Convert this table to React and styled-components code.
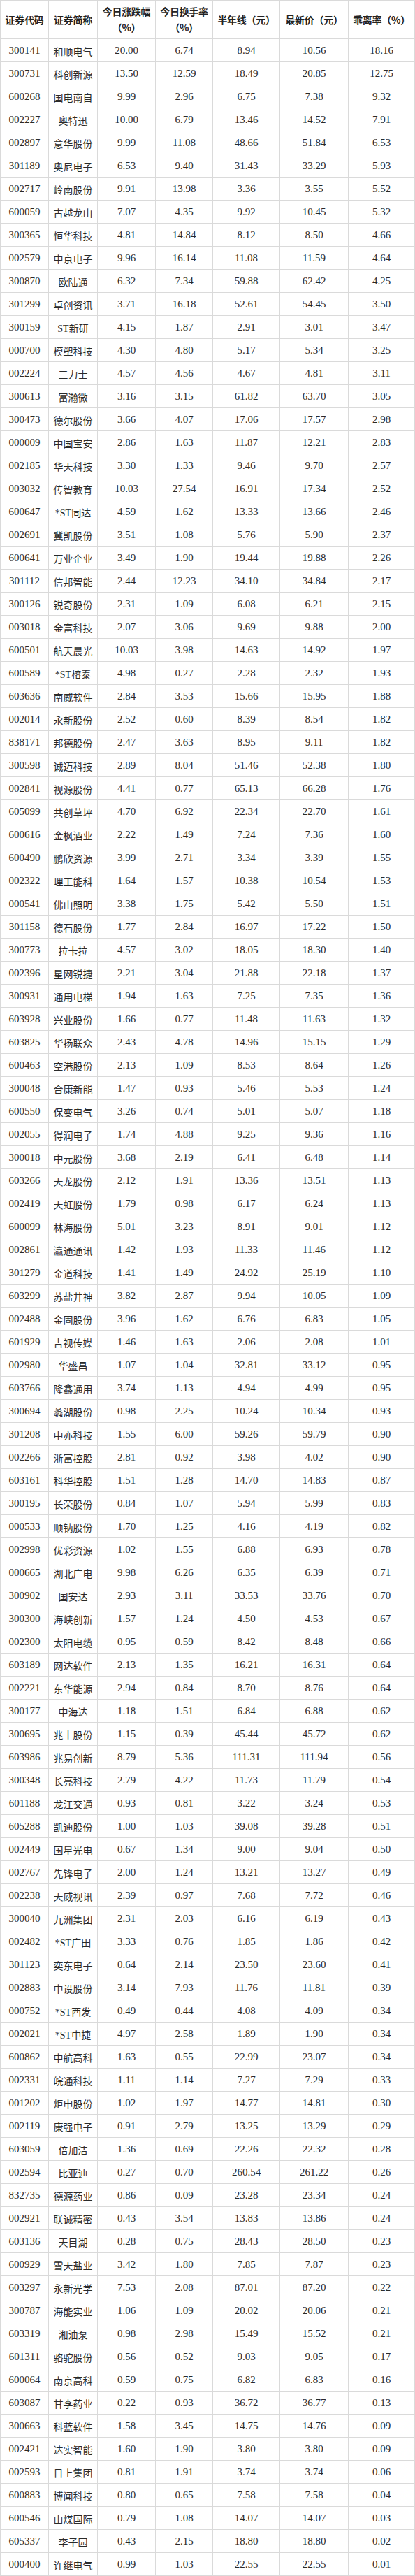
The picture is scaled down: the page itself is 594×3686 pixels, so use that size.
import React from "react";
import styled, { createGlobalStyle } from "styled-components";

const GlobalStyle = createGlobalStyle`
  html, body {
    margin: 0;
    padding: 0;
    background: #fff;
  }
  body {
    font-family: "Liberation Serif", "Noto Sans CJK SC", serif;
    color: #222;
  }
`;

const RAW = `
300141 和顺电气 20.00 6.74 8.94 10.56 18.16
300731 科创新源 13.50 12.59 18.49 20.85 12.75
600268 国电南自 9.99 2.96 6.75 7.38 9.32
002227 奥特迅 10.00 6.79 13.46 14.52 7.91
002897 意华股份 9.99 11.08 48.66 51.84 6.53
301189 奥尼电子 6.53 9.40 31.43 33.29 5.93
002717 岭南股份 9.91 13.98 3.36 3.55 5.52
600059 古越龙山 7.07 4.35 9.92 10.45 5.32
300365 恒华科技 4.81 14.84 8.12 8.50 4.66
002579 中京电子 9.96 16.14 11.08 11.59 4.64
300870 欧陆通 6.32 7.34 59.88 62.42 4.25
301299 卓创资讯 3.71 16.18 52.61 54.45 3.50
300159 ST新研 4.15 1.87 2.91 3.01 3.47
000700 模塑科技 4.30 4.80 5.17 5.34 3.25
002224 三力士 4.57 4.56 4.67 4.81 3.11
300613 富瀚微 3.16 3.15 61.82 63.70 3.05
300473 德尔股份 3.66 4.07 17.06 17.57 2.98
000009 中国宝安 2.86 1.63 11.87 12.21 2.83
002185 华天科技 3.30 1.33 9.46 9.70 2.57
003032 传智教育 10.03 27.54 16.91 17.34 2.52
600647 *ST同达 4.59 1.62 13.33 13.66 2.46
002691 冀凯股份 3.51 1.08 5.76 5.90 2.37
600641 万业企业 3.49 1.90 19.44 19.88 2.26
301112 信邦智能 2.44 12.23 34.10 34.84 2.17
300126 锐奇股份 2.31 1.09 6.08 6.21 2.15
003018 金富科技 2.07 3.06 9.69 9.88 2.00
600501 航天晨光 10.03 3.98 14.63 14.92 1.97
600589 *ST榕泰 4.98 0.27 2.28 2.32 1.93
603636 南威软件 2.84 3.53 15.66 15.95 1.88
002014 永新股份 2.52 0.60 8.39 8.54 1.82
838171 邦德股份 2.47 3.63 8.95 9.11 1.82
300598 诚迈科技 2.89 8.04 51.46 52.38 1.80
002841 视源股份 4.41 0.77 65.13 66.28 1.76
605099 共创草坪 4.70 6.92 22.34 22.70 1.61
600616 金枫酒业 2.22 1.49 7.24 7.36 1.60
600490 鹏欣资源 3.99 2.71 3.34 3.39 1.55
002322 理工能科 1.64 1.57 10.38 10.54 1.53
000541 佛山照明 3.38 1.75 5.42 5.50 1.51
301158 德石股份 1.77 2.84 16.97 17.22 1.50
300773 拉卡拉 4.57 3.02 18.05 18.30 1.40
002396 星网锐捷 2.21 3.04 21.88 22.18 1.37
300931 通用电梯 1.94 1.63 7.25 7.35 1.36
603928 兴业股份 1.66 0.77 11.48 11.63 1.32
603825 华扬联众 2.43 4.78 14.96 15.15 1.29
600463 空港股份 2.13 1.09 8.53 8.64 1.26
300048 合康新能 1.47 0.93 5.46 5.53 1.24
600550 保变电气 3.26 0.74 5.01 5.07 1.18
002055 得润电子 1.74 4.88 9.25 9.36 1.16
300018 中元股份 3.68 2.19 6.41 6.48 1.14
603266 天龙股份 2.12 1.91 13.36 13.51 1.13
002419 天虹股份 1.79 0.98 6.17 6.24 1.13
600099 林海股份 5.01 3.23 8.91 9.01 1.12
002861 瀛通通讯 1.42 1.93 11.33 11.46 1.12
301279 金道科技 1.41 1.49 24.92 25.19 1.10
603299 苏盐井神 3.82 2.87 9.94 10.05 1.09
002488 金固股份 3.96 1.62 6.76 6.83 1.05
601929 吉视传媒 1.46 1.63 2.06 2.08 1.01
002980 华盛昌 1.07 1.04 32.81 33.12 0.95
603766 隆鑫通用 3.74 1.13 4.94 4.99 0.95
300694 蠡湖股份 0.98 2.25 10.24 10.34 0.93
301208 中亦科技 1.55 6.00 59.26 59.79 0.90
002266 浙富控股 2.81 0.92 3.98 4.02 0.90
603161 科华控股 1.51 1.28 14.70 14.83 0.87
300195 长荣股份 0.84 1.07 5.94 5.99 0.83
000533 顺钠股份 1.70 1.25 4.16 4.19 0.82
002998 优彩资源 1.02 1.55 6.88 6.93 0.78
000665 湖北广电 9.98 6.26 6.35 6.39 0.71
300902 国安达 2.93 3.11 33.53 33.76 0.70
300300 海峡创新 1.57 1.24 4.50 4.53 0.67
002300 太阳电缆 0.95 0.59 8.42 8.48 0.66
603189 网达软件 2.13 1.35 16.21 16.31 0.64
002221 东华能源 2.94 0.84 8.70 8.76 0.64
300177 中海达 1.18 1.51 6.84 6.88 0.62
300695 兆丰股份 1.15 0.39 45.44 45.72 0.62
603986 兆易创新 8.79 5.36 111.31 111.94 0.56
300348 长亮科技 2.79 4.22 11.73 11.79 0.54
601188 龙江交通 0.93 0.81 3.22 3.24 0.53
605288 凯迪股份 1.00 1.03 39.08 39.28 0.51
002449 国星光电 0.67 1.34 9.00 9.04 0.50
002767 先锋电子 2.00 1.24 13.21 13.27 0.49
002238 天威视讯 2.39 0.97 7.68 7.72 0.46
300040 九洲集团 2.31 2.03 6.16 6.19 0.43
002482 *ST广田 3.33 0.76 1.85 1.86 0.42
301123 奕东电子 0.64 2.14 23.50 23.60 0.41
002883 中设股份 3.14 7.93 11.76 11.81 0.39
000752 *ST西发 0.49 0.44 4.08 4.09 0.34
002021 *ST中捷 4.97 2.58 1.89 1.90 0.34
600862 中航高科 1.63 0.55 22.99 23.07 0.34
002331 皖通科技 1.11 1.14 7.27 7.29 0.33
001202 炬申股份 1.02 1.97 14.77 14.81 0.30
002119 康强电子 0.91 2.79 13.25 13.29 0.29
603059 倍加洁 1.36 0.69 22.26 22.32 0.28
002594 比亚迪 0.27 0.70 260.54 261.22 0.26
832735 德源药业 0.86 0.09 23.28 23.34 0.24
002921 联诚精密 0.43 3.54 13.83 13.86 0.24
603136 天目湖 0.28 0.75 28.43 28.50 0.23
600929 雪天盐业 3.42 1.80 7.85 7.87 0.23
603297 永新光学 7.53 2.08 87.01 87.20 0.22
300787 海能实业 1.06 1.09 20.02 20.06 0.21
603319 湘油泵 0.98 2.98 15.49 15.52 0.21
601311 骆驼股份 0.56 0.52 9.03 9.05 0.17
600064 南京高科 0.59 0.75 6.82 6.83 0.16
603087 甘李药业 0.22 0.93 36.72 36.77 0.13
300663 科蓝软件 1.58 3.45 14.75 14.76 0.09
002421 达实智能 1.60 1.90 3.80 3.80 0.09
002593 日上集团 0.81 1.91 3.74 3.74 0.06
600883 博闻科技 0.80 0.65 7.58 7.58 0.04
600546 山煤国际 0.79 1.08 14.07 14.07 0.03
605337 李子园 0.43 2.15 18.80 18.80 0.02
000400 许继电气 0.99 1.03 22.55 22.55 0.01
`;

const rows = RAW.trim().split("\n").map((line) => line.trim().split(/\s+/));

const headers = [
  ["证券代码"],
  ["证券简称"],
  ["今日涨跌幅", "（%）"],
  ["今日换手率", "（%）"],
  ["半年线（元）"],
  ["最新价（元）"],
  ["乖离率（%）"],
];

const Table = styled.div`
  display: grid;
  grid-template-columns: 69px 70px 83px 82px 96px 98px 95px;
  grid-template-rows: 55px;
  grid-auto-rows: 33px;
  width: 594px;
  box-sizing: border-box;
  border-top: 1px solid #dadada;
  border-left: 1px solid #dadada;
  background: #fff;
`;

const HeadCell = styled.div`
  box-sizing: border-box;
  display: flex;
  flex-direction: column;
  align-items: center;
  justify-content: center;
  border-right: 1px solid #dadada;
  border-bottom: 1px solid #dadada;
  font-family: "Noto Sans CJK SC", "Liberation Serif", sans-serif;
  font-size: 14px;
  font-weight: 700;
  line-height: 23px;
  color: #222;
  white-space: nowrap;
  letter-spacing: -0.3px;
`;

const Cell = styled.div`
  box-sizing: border-box;
  display: flex;
  align-items: center;
  justify-content: center;
  border-right: 1px solid #dadada;
  border-bottom: 1px solid #dadada;
  font-size: ${(p) => (p.$name ? "14px" : "15px")};
  color: #2a2a2a;
  white-space: nowrap;
  overflow: hidden;
  padding-top: 1px;
`;

export default function App() {
  return (
    <>
      <GlobalStyle />
      <Table>
        {headers.map((lines, i) => (
          <HeadCell key={"h" + i}>
            {lines.map((l, j) => (
              <span key={j}>{l}</span>
            ))}
          </HeadCell>
        ))}
        {rows.map((r) =>
          r.map((v, j) => (
            <Cell key={r[0] + "-" + j} $name={j === 1}>
              {v}
            </Cell>
          ))
        )}
      </Table>
    </>
  );
}
